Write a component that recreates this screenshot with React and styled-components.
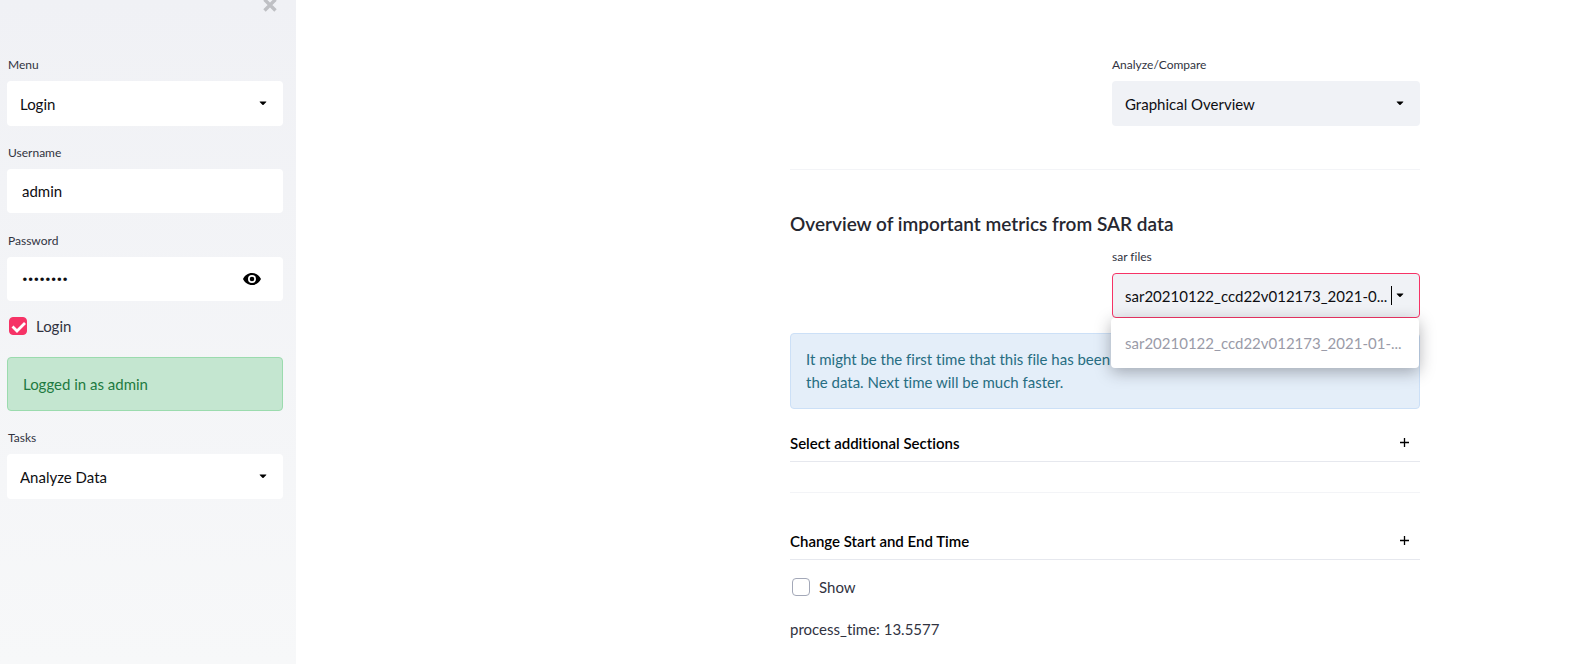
import React, { useState } from "react";
import styled, { createGlobalStyle } from "styled-components";

const GlobalStyle = createGlobalStyle`
  *, *::before, *::after { box-sizing: border-box; }
  body {
    margin: 0;
    background: #fff;
    color: #31333f;
    font: 400 15px/24px Lato, "Noto Sans", sans-serif;
    font-variant-ligatures: none;
  }
  button, input, select { font: inherit; color: inherit; }
`;

const Page = styled.div`
  display: flex;
  min-height: 100vh;
`;

const Sidebar = styled.aside`
  flex: 0 0 296px;
  min-width: 0;
  padding: 0 13px 24px 7px;
  background: linear-gradient(180deg, #f0f1f5, #f7f8f9);
`;

const SidebarTop = styled.div`
  display: flex;
  justify-content: flex-end;
  height: 57px;
  padding-right: 6px;
`;

const CloseButton = styled.button`
  display: block;
  width: 14px;
  height: 12px;
  padding: 0;
  border: 0;
  background: none;
  color: #bfc0c4;
  svg { display: block; }
`;

const Main = styled.main`
  flex: 1;
  min-width: 0;
  display: flex;
  justify-content: flex-end;
  padding: 57px 162px 20px 24px;
`;

const Content = styled.div`
  width: 100%;
  max-width: 630px;
`;

const Columns = styled.div`
  display: grid;
  grid-template-columns: 1fr 1fr;
  column-gap: 14px;
`;

const RightColumn = styled.div`
  grid-column: 2;
  min-width: 0;
`;

const Field = styled.div`
  position: relative;
  margin-top: ${(p) => p.$gap || 0}px;
`;

const Label = styled.label`
  display: block;
  margin-bottom: 8px;
  padding-left: ${(p) => (p.$inset ? 1 : 0)}px;
  font-size: 12px;
  line-height: 16px;
`;

const Control = styled.div`
  display: flex;
  align-items: center;
  position: relative;
  height: ${(p) => (p.$text ? 44 : 45)}px;
  border: 1px solid ${(p) => (p.$active ? "#f63366" : "transparent")};
  border-radius: 4px;
  background: ${(p) => (p.$grey ? "#f0f2f6" : "#fff")};
  color: #0e0e12;
`;

const NativeSelect = styled.select`
  width: 100%;
  height: 100%;
  padding: 0 32px 0 12px;
  border: 0;
  outline: 0;
  appearance: none;
  background: transparent;
`;

const TextInput = styled.input`
  flex: 1;
  min-width: 0;
  height: 100%;
  padding: 0 0 0 14px;
  border: 0;
  outline: 0;
  background: transparent;
  &[type="password"] { font: 17px/24px Roboto, sans-serif; }
`;

const ComboInput = styled(TextInput)`
  padding-left: 12px;
`;

const Caret = styled.span`
  width: 1px;
  height: 19px;
  margin-right: 27px;
  background: #000;
`;

const Arrow = styled.svg`
  position: absolute;
  right: 15px;
  top: 19px;
  pointer-events: none;
`;

const RevealButton = styled.button`
  width: 20px;
  height: 20px;
  margin-right: 20px;
  padding: 0;
  border: 0;
  background: none;
  color: #000;
  svg { display: block; }
`;

const CheckRow = styled.label`
  display: flex;
  align-items: center;
  gap: 9px;
  height: 18px;
  margin-top: ${(p) => p.$gap}px;
  padding-left: 2px;
`;

const CheckMark = styled.input`
  width: 18px;
  height: 18px;
  margin: 0;
  border: 1px solid #a3a8b8;
  border-radius: 4px;
  appearance: none;
  background: #fff;
  &:checked {
    border-color: #f63366;
    background: #f63366 url("data:image/svg+xml,%3Csvg xmlns='http://www.w3.org/2000/svg' viewBox='0 0 18 18' fill='none' stroke='white' stroke-width='2.8'%3E%3Cpath d='M3.500 9.500l4.500 4.500 8-8'/%3E%3C/svg%3E") center / 18px 18px no-repeat;
  }
`;

const Alert = styled.div`
  margin-top: ${(p) => p.$gap}px;
  padding: 14px 15px;
  border: 1px solid ${(p) => (p.$success ? "#9bdbae" : "#cce0f7")};
  border-radius: 4px;
  background: ${(p) => (p.$success ? "#c4e6d0" : "#e4eef9")};
  color: ${(p) => (p.$success ? "#1e7a41" : "#276d82")};
  line-height: ${(p) => (p.$success ? 24 : 23)}px;
`;

const Menu = styled.ul`
  position: absolute;
  z-index: 2;
  top: 100%;
  left: -1px;
  width: 100%;
  margin: 0;
  padding: 0;
  list-style: none;
  border-radius: 4px;
  background: #fff;
  box-shadow: 0 4px 16px rgba(38, 39, 48, 0.36);
`;

const MenuItem = styled.li`
  padding: 13px 14px;
  overflow: hidden;
  white-space: nowrap;
  text-overflow: ellipsis;
  color: #9a9ba8;
`;

const Rule = styled.hr`
  height: 1px;
  margin: ${(p) => p.$above}px 0 ${(p) => p.$below}px;
  border: 0;
  background: #f3f4f7;
`;

const Heading = styled.h3`
  margin: 0 0 14px;
  color: #262730;
  font-size: 19px;
  line-height: 23px;
  font-weight: 600;
`;

const Expander = styled.button`
  display: flex;
  justify-content: space-between;
  align-items: center;
  width: 100%;
  height: 38px;
  margin-top: ${(p) => p.$gap || 0}px;
  padding: 0 11px 0 0;
  border: 0;
  border-bottom: 1px solid #e6e8ee;
  background: none;
  color: #000;
  font-weight: 600;
`;

const Note = styled.p`
  margin: 21px 0 0;
`;

const DownArrow = () => (
  <Arrow width="8" height="5" viewBox="0 0 8 5" aria-hidden="true">
    <path d="M1 .5h6q.7 0 .3.6L4.6 3.8q-.6.6-1.2 0L.7 1.1Q.3.5 1 .5z" />
  </Arrow>
);

function SelectField({ id, label, value, gap, grey }) {
  return (
    <Field $gap={gap}>
      <Label htmlFor={id} $inset={!grey}>{label}</Label>
      <Control $grey={grey}>
        <NativeSelect id={id} defaultValue={value}>
          <option>{value}</option>
        </NativeSelect>
        <DownArrow />
      </Control>
    </Field>
  );
}

function ExpanderRow({ title, gap }) {
  return (
    <Expander type="button" aria-expanded="false" $gap={gap}>
      <span>{title}</span>
      <svg width="9" height="9" viewBox="0 0 9 9" stroke="#000" strokeWidth="1.3" aria-hidden="true">
        <path d="M4.5 0v9M0 4.5h9" />
      </svg>
    </Expander>
  );
}

export default function App() {
  const [revealed, setRevealed] = useState(false);
  return (
    <>
      <GlobalStyle />
      <Page>
        <Sidebar>
          <SidebarTop>
            <CloseButton type="button" aria-label="Close sidebar">
              <svg width="14" height="12" viewBox="0 0 14 12" stroke="currentColor" strokeWidth="3.4">
                <path d="M1.5-.5l11 11M12.5-.5l-11 11" />
              </svg>
            </CloseButton>
          </SidebarTop>
          <SelectField id="menu" label="Menu" value="Login" />
          <Field $gap={19}>
            <Label htmlFor="username" $inset>Username</Label>
            <Control $text>
              <TextInput id="username" type="text" defaultValue="admin" />
            </Control>
          </Field>
          <Field $gap={20}>
            <Label htmlFor="password" $inset>Password</Label>
            <Control $text>
              <TextInput id="password" type={revealed ? "text" : "password"} defaultValue="password" />
              <RevealButton type="button" aria-label="Show password" onClick={() => setRevealed(!revealed)}>
                <svg width="20" height="20" viewBox="0 0 20 20">
                  <path
                    fill="currentColor"
                    fillRule="evenodd"
                    d="M10 4C6 4 2.700 6.400 1 10c1.700 3.600 5 6 9 6s7.300-2.400 9-6c-1.700-3.600-5-6-9-6zm0 2a4 4 0 1 1 0 8 4 4 0 0 1 0-8zm0 1.700a2.300 2.300 0 1 0 0 4.600 2.300 2.300 0 0 0 0-4.600z"
                  />
                </svg>
              </RevealButton>
            </Control>
          </Field>
          <CheckRow $gap={16}>
            <CheckMark type="checkbox" defaultChecked />
            <span>Login</span>
          </CheckRow>
          <Alert $success $gap={22} role="status">Logged in as admin</Alert>
          <SelectField id="tasks" label="Tasks" value="Analyze Data" gap={19} />
        </Sidebar>

        <Main>
          <Content>
            <Columns>
              <RightColumn>
                <SelectField id="analyze" label="Analyze/Compare" value="Graphical Overview" grey />
              </RightColumn>
            </Columns>
            <Rule $above={43} $below={42} />
            <Heading>Overview of important metrics from SAR data</Heading>
            <Columns>
              <RightColumn>
                <Field>
                  <Label htmlFor="sar-files">sar files</Label>
                  <Control $grey $active>
                    <ComboInput
                      id="sar-files"
                      role="combobox"
                      aria-expanded="true"
                      aria-controls="sar-options"
                      defaultValue="sar20210122_ccd22v012173_2021-0..."
                    />
                    <Caret />
                    <DownArrow />
                  </Control>
                  <Menu id="sar-options" role="listbox">
                    <MenuItem role="option" aria-selected="true">sar20210122_ccd22v012173_2021-01-...</MenuItem>
                  </Menu>
                </Field>
              </RightColumn>
            </Columns>
            <Alert $gap={15}>
              It might be the first time that this file has been c<br />
              the data. Next time will be much faster.
            </Alert>
            <ExpanderRow title="Select additional Sections" gap={15} />
            <Rule $above={30} $below={29} />
            <ExpanderRow title="Change Start and End Time" />
            <CheckRow $gap={18}>
              <CheckMark type="checkbox" />
              <span>Show</span>
            </CheckRow>
            <Note>process_time: 13.5577</Note>
          </Content>
        </Main>
      </Page>
    </>
  );
}
